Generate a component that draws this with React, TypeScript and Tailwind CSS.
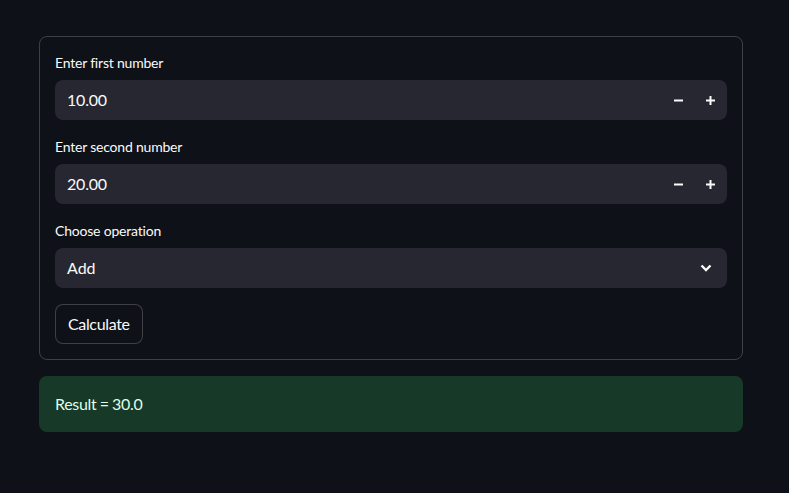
const font = { fontFamily: "Lato, 'Noto Sans', sans-serif" };

function MinusIcon() {
  return (
    <svg width="9" height="9" viewBox="0 0 9 9">
      <rect x="0" y="3.5" width="9" height="2" fill="#fafafa" />
    </svg>
  );
}

function PlusIcon() {
  return (
    <svg width="9" height="9" viewBox="0 0 9 9">
      <rect x="0" y="3.5" width="9" height="2" fill="#fafafa" />
      <rect x="3.5" y="0" width="2" height="9" fill="#fafafa" />
    </svg>
  );
}

function Label({ children }: { children: string }) {
  return <label className="text-[14px] text-[#fafafa] h-6 mb-1 block leading-[22px] tracking-[-0.2px]">{children}</label>;
}

function NumberInput({ label, value }: { label: string; value: string }) {
  return (
    <div className="flex flex-col">
      <Label>{label}</Label>
      <div className="h-10 bg-[#262730] rounded-lg flex items-center pr-px">
        <span className="flex-1 pl-3 pb-px text-[16px] text-[#fafafa] tracking-[-0.2px]">{value}</span>
        <button className="w-8 h-10 flex items-center justify-center">
          <MinusIcon />
        </button>
        <button className="w-8 h-10 flex items-center justify-center rounded-r-lg">
          <PlusIcon />
        </button>
      </div>
    </div>
  );
}

export default function App() {
  return (
    <main className="min-h-[493px] w-full bg-[#0e1117] pt-9 px-[39px]" style={font}>
      <div className="w-[704px] flex flex-col gap-4">
        {/* Form */}
        <div className="border border-[#fafafa]/20 rounded-lg p-[15px] flex flex-col gap-4">
          <NumberInput label="Enter first number" value="10.00" />
          <NumberInput label="Enter second number" value="20.00" />

          <div className="flex flex-col">
            <Label>Choose operation</Label>
            <div className="h-10 bg-[#262730] rounded-lg flex items-center pl-3 pr-[15px]">
              <span className="flex-1 pb-px text-[16px] text-[#fafafa]">Add</span>
              <svg width="12" height="8" viewBox="0 0 12 8" fill="none">
                <path d="M1.5 1.5 L6 6 L10.5 1.5" stroke="#fafafa" strokeWidth="2.4" />
              </svg>
            </div>
          </div>

          <div>
            <button className="h-10 px-3 pb-px rounded-lg border border-[#fafafa]/20 bg-[#0e1117] text-[16px] text-[#fafafa] tracking-[-0.35px]">
              Calculate
            </button>
          </div>
        </div>

        {/* Result */}
        <div className="h-14 rounded-lg bg-[#173928] flex items-center px-4">
          <span className="text-[16px] text-[#dffde9] tracking-[-0.3px] [word-spacing:-0.5px]">Result = 30.0</span>
        </div>
      </div>
    </main>
  );
}
